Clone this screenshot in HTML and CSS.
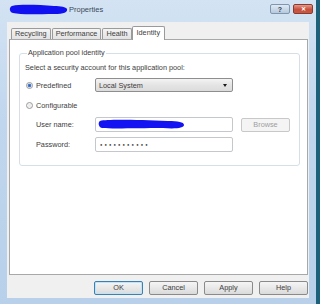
FILE: index.html
```html
<!DOCTYPE html>
<html lang="en">
<head>
    <meta charset="UTF-8">
    <title>Properties</title>
    <link rel="stylesheet" href="styles.css">
</head>
<body>
    <div class="window">
        <div class="titlebar">
            <svg class="scribble" width="60" height="11" viewBox="0 0 60 11">
                <path d="M3 2 C12 0 30 1 45 2 C52 2 57 3 58 5 C59 8 55 10 45 10 C30 10 12 11 4 9 C0 8 0 3 3 2 Z" fill="#1010f0"/>
            </svg>
            <span class="title">Properties</span>
            <span class="tb-btn help">?</span>
            <span class="tb-btn close">&#x2715;</span>
        </div>
        <div class="client">
            <div class="tabs">
                <span class="tab">Recycling</span>
                <span class="tab">Performance</span>
                <span class="tab">Health</span>
                <span class="tab active">Identity</span>
            </div>
            <div class="panel">
                <fieldset class="group">
                    <legend>Application pool identity</legend>
                    <div class="line">Select a security account for this application pool:</div>
                    <div class="row predefined">
                        <label class="opt"><span class="radio checked"></span>Predefined</label>
                        <div class="select">
                            <span>Local System</span>
                            <span class="arrow"></span>
                        </div>
                    </div>
                    <div class="row configurable">
                        <label class="opt"><span class="radio"></span>Configurable</label>
                    </div>
                    <div class="row field">
                        <span class="label">User name:</span>
                        <div class="input">
                            <svg width="88" height="11" viewBox="0 0 88 11">
                                <path d="M2 2 C10 0 40 1 70 2 C80 2 86 3 86 6 C86 9 78 10 65 9 C40 9 15 10 4 9 C0 8 0 3 2 2 Z" fill="#1414f2"/>
                            </svg>
                        </div>
                        <span class="btn disabled">Browse</span>
                    </div>
                    <div class="row field pw">
                        <span class="label">Password:</span>
                        <div class="input dots">&#x25CF;&#x25CF;&#x25CF;&#x25CF;&#x25CF;&#x25CF;&#x25CF;&#x25CF;&#x25CF;&#x25CF;&#x25CF;</div>
                    </div>
                </fieldset>
            </div>
            <div class="actions">
                <span class="btn default">OK</span>
                <span class="btn">Cancel</span>
                <span class="btn">Apply</span>
                <span class="btn">Help</span>
            </div>
        </div>
    </div>
</body>
</html>
```

FILE: styles.css
```css
body {
    margin: 0;
    background: #1d6079;
    font-family: "Liberation Sans", Arial, sans-serif;
    font-size: 7.3px;
    color: #404040;
}
.window {
    width: 316px;
    height: 304px;
    box-sizing: border-box;
    padding: 0 7px 6px 7px;
    background: linear-gradient(to bottom, #d3e3f3, #c0d6ee 40%, #b8d0ea);
    display: flex;
    flex-direction: column;
}
.titlebar {
    height: 22px;
    display: flex;
    align-items: center;
    margin: 0 -4px 0 0;
    flex-shrink: 0;
}
.scribble {
    margin-left: 2px;
    margin-top: -3px;
}
.title {
    font-size: 7.5px;
    color: #3a4a5a;
    margin-top: -3px;
    flex: 1;
}
.tb-btn {
    width: 20px;
    height: 10px;
    box-sizing: border-box;
    border-radius: 2px;
    margin-top: -4px;
    font-size: 7px;
    line-height: 9px;
    text-align: center;
    font-weight: bold;
}
.help {
    background: linear-gradient(to bottom, #dfe9f4, #b6c9dd);
    border: 1px solid #8096ad;
    color: #33404d;
    margin-right: 3px;
}
.close {
    background: linear-gradient(to bottom, #e39a8c, #c8503c 55%, #c45a44);
    border: 1px solid #8b3a2e;
    color: #fff;
    font-size: 6px;
}
.client {
    flex: 1;
    background: #f0f0f0;
    display: flex;
    flex-direction: column;
    padding: 4px 1px 0 2px;
}
.tabs {
    display: flex;
    align-items: flex-end;
    height: 13px;
    padding-left: 2px;
    position: relative;
    z-index: 1;
}
.tab {
    height: 11px;
    box-sizing: border-box;
    border: 1px solid #9a9a9a;
    border-bottom: none;
    background: linear-gradient(to bottom, #f4f4f4, #e2e2e2);
    line-height: 10px;
    padding: 0 3px;
    margin-right: 1px;
    border-radius: 2px 2px 0 0;
}
.tab.active {
    height: 14px;
    margin-bottom: -1px;
    background: #fff;
    margin-left: -1px;
    padding: 0 4px;
    line-height: 12px;
}
.panel {
    height: 236px;
    box-sizing: border-box;
    border: 1px solid #a8a8a8;
    background: #fff;
    padding-top: 8px;
}
.group {
    margin: 0 7px 0 9px;
    padding: 0 5px 13px 5px;
    border: 1px solid #d5dfe5;
    border-radius: 3px;
    min-width: 0;
}
.group legend {
    padding: 0 1px;
    margin-left: 2px;
    line-height: 10px;
}
.line {
    line-height: 10px;
    margin-top: 5px;
}
.row {
    display: flex;
    align-items: center;
}
.predefined {
    height: 14px;
    margin-top: 5px;
}
.configurable {
    height: 10px;
    margin-top: 8px;
}
.field {
    height: 15px;
    margin-top: 7px;
}
.field.pw {
    margin-top: 5px;
}
.opt {
    width: 70px;
    display: flex;
    align-items: center;
}
.radio {
    width: 7px;
    height: 7px;
    box-sizing: border-box;
    border-radius: 50%;
    border: 1px solid #9a9a9a;
    background: radial-gradient(circle, #e8e8e8, #fafafa);
    margin: 0 3px 0 1px;
}
.radio.checked {
    background: radial-gradient(circle, #2a5fb8 0, #4f86d4 1.5px, #f2f2f2 2.2px);
}
.select {
    width: 138px;
    height: 14px;
    box-sizing: border-box;
    border: 1px solid #8e8e8e;
    border-radius: 2px;
    background: linear-gradient(to bottom, #f4f4f4, #e4e4e4 50%, #dcdcdc);
    display: flex;
    align-items: center;
    justify-content: space-between;
    padding: 0 5px 0 3px;
}
.arrow {
    width: 0;
    height: 0;
    border-left: 2.5px solid transparent;
    border-right: 2.5px solid transparent;
    border-top: 3px solid #1a1a1a;
}
.label {
    width: 59px;
    margin-left: 11px;
}
.input {
    width: 138px;
    height: 15px;
    box-sizing: border-box;
    border: 1px solid #c4c8cc;
    border-radius: 2px;
    background: #fff;
    display: flex;
    align-items: center;
    padding-left: 2px;
}
.input.dots {
    font-size: 4px;
    letter-spacing: 2.1px;
    color: #333;
    padding-left: 4px;
}
.btn {
    width: 49px;
    height: 14px;
    box-sizing: border-box;
    border: 1px solid #8a8a8a;
    border-radius: 2px;
    background: linear-gradient(to bottom, #f5f5f5, #e8e8e8 50%, #dadada);
    text-align: center;
    line-height: 12px;
}
.btn.disabled {
    margin-left: 8px;
    border-color: #c8c8c8;
    background: #f4f4f4;
    color: #9e9e9e;
}
.btn.default {
    border-color: #3c7fb1;
    box-shadow: inset 0 0 0 1px #bfe3f7;
}
.actions {
    display: flex;
    justify-content: flex-end;
    gap: 6px;
    margin-top: 6px;
}
```
